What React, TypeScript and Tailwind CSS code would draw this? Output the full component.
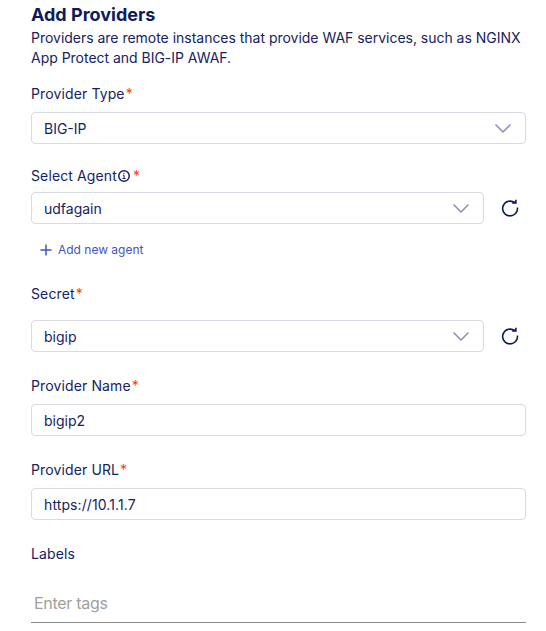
import React from "react";

function Label({ text, top, info, required = true }: { text: string; top: string; info?: boolean; required?: boolean }) {
  return (
    <div className={`flex h-5 items-center whitespace-nowrap text-[14px] leading-5 tracking-[0.12px] ${top}`}>
      <span>{text}</span>
      {info && (
        <svg className="ml-px h-3 w-3" viewBox="0 0 12 12" fill="none" stroke="currentColor" strokeWidth="1.5">
          <circle cx="6" cy="6" r="5.25" />
          <path d="M4.9 5.3H6.1V8.5M4.6 8.5H7.5" strokeWidth="1" />
          <circle cx="6" cy="3.4" r=".7" fill="currentColor" stroke="none" />
        </svg>
      )}
      {required && <span className={`${info ? "ml-[3px]" : "ml-px"} text-[#ff3b20]`}>*</span>}
    </div>
  );
}

function Field({ value, select, tracking = "tracking-normal" }: { value: string; select?: boolean; tracking?: string }) {
  return (
    <div className="flex h-8 min-w-0 flex-1 items-center justify-between rounded-[4px] border border-[#d9dae5] pl-3 pr-3.5 text-[14px] leading-5">
      <span className={`pt-0.5 ${tracking}`}>{value}</span>
      {select && (
        <svg className="h-[9px] w-4" viewBox="0 0 16 9" fill="none" stroke="#9194b8" strokeWidth="1.7" strokeLinecap="round" strokeLinejoin="round">
          <path d="M1 1l7 7 7-7" />
        </svg>
      )}
    </div>
  );
}

function Refresh() {
  return (
    <svg className="ml-4 mr-1.5 h-5 w-5" viewBox="0 0 20 20" fill="none" stroke="#0d1c57" strokeWidth="1.6">
      <path d="M17.4 9.5A7.4 7.4 0 1 1 14.9 4.9" />
      <path d="M12.2 5h3.7V1.7" />
      <path d="M12.8 4.5h2.5V2.7z" fill="#0d1c57" stroke="none" />
    </svg>
  );
}

export default function App() {
  return (
    <main className="h-[631px] w-[546px] overflow-hidden bg-white pl-[31px] pr-5 pt-1 font-['Inter',sans-serif] text-[#15235e]">
      <h1 className="h-6 text-[18px] font-bold leading-[22px] text-[#0d1c57]">Add Providers</h1>
      <p className="whitespace-nowrap text-[14px] leading-5 tracking-[-0.02px]">
        Providers are remote instances that provide WAF services, such as NGINX
        <br />
        App Protect and BIG-IP AWAF.
      </p>
      <Label text="Provider Type" top="mt-4" />
      <div className="mt-2 flex"><Field value="BIG-IP" select /></div>
      <Label text="Select Agent" top="mt-[22px]" info />
      <div className="mt-1.5 flex items-center"><Field value="udfagain" select /><Refresh /></div>
      <button className="ml-[9px] mt-4 flex h-5 items-center gap-1.5 text-[12px] tracking-[-0.01px] text-[#4053c8]">
        <svg className="h-3 w-3" viewBox="0 0 12 12" fill="none" stroke="currentColor" strokeWidth="1.5"><path d="M6 .5v11M.5 6h11" /></svg>
        Add new agent
      </button>
      <Label text="Secret" top="mt-6" />
      <div className="mt-4 flex items-center"><Field value="bigip" select /><Refresh /></div>
      <Label text="Provider Name" top="mt-6" />
      <div className="mt-2 flex"><Field value="bigip2" /></div>
      <Label text="Provider URL" top="mt-6" />
      <div className="mt-2 flex"><Field value="https://10.1.1.7" tracking="tracking-[0.1px]" /></div>
      <Label text="Labels" top="mt-6" required={false} />
      <div className="mt-[22px] h-[37px] border-b border-[#8a8a8a] pl-[3px] pt-[5px] text-[16px] leading-6 tracking-[-0.3px] text-[#a0a0a0]">Enter tags</div>
    </main>
  );
}
